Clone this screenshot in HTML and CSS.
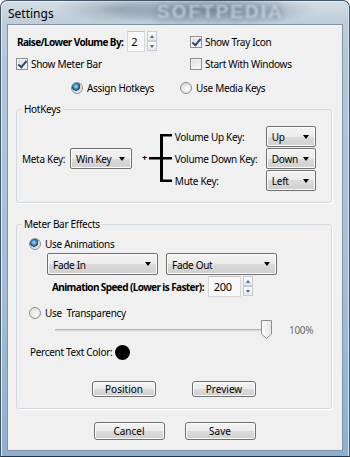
FILE: index.html
```html
<!DOCTYPE html>
<html lang="en">

<head>
    <meta charset="UTF-8">
    <meta name="viewport" content="width=device-width, initial-scale=1.0">
    <title>Settings</title>
    <link rel="stylesheet" href="styles.css">
</head>

<body>
    <div class="window">
        <div class="titlebar">
            <span class="title">Settings</span>
            <span class="glass">SOFTPEDIA</span>
        </div>
        <div class="client">
            <div class="grid">
                <div class="cell">
                    <b class="bold">Raise/Lower Volume By:</b>
                    <span class="spin"><span class="num">2</span><span class="arrows"><i class="up"></i><i class="down"></i></span></span>
                </div>
                <label class="cell check"><span class="box on"></span>Show Tray Icon</label>
                <label class="cell check"><span class="box on"></span>Show Meter Bar</label>
                <label class="cell check"><span class="box"></span>Start With Windows</label>
            </div>

            <div class="modes">
                <label class="mode"><span class="radio on"></span>Assign Hotkeys</label>
                <label class="mode"><span class="radio"></span>Use Media Keys</label>
            </div>

            <fieldset class="group">
                <legend>HotKeys</legend>
                <div class="hot">
                    <span class="meta">Meta Key:</span>
                    <span class="combo win">Win Key</span>
                    <span class="plus">+</span>
                    <svg class="bracket" width="23" height="50" viewBox="0 0 23 50">
                        <rect x="11" y="1" width="3" height="48" fill="#000" />
                        <rect x="11" y="1" width="12" height="2.5" fill="#000" />
                        <rect x="0" y="24" width="23" height="2.5" fill="#000" />
                        <rect x="11" y="46.5" width="12" height="2.5" fill="#000" />
                    </svg>
                    <div class="keys">
                        <div class="key"><span>Volume Up Key:</span><span class="combo small">Up</span></div>
                        <div class="key"><span>Volume Down Key:</span><span class="combo small">Down</span></div>
                        <div class="key"><span>Mute Key:</span><span class="combo small">Left</span></div>
                    </div>
                </div>
            </fieldset>

            <fieldset class="group meter">
                <legend>Meter Bar Effects</legend>
                <div class="inner">
                    <label class="opt"><span class="radio on"></span>Use Animations</label>
                    <div class="fades">
                        <span class="combo fade">Fade In</span>
                        <span class="combo fade">Fade Out</span>
                    </div>
                    <div class="speed">
                        <b class="bold">Animation Speed (Lower is Faster):</b>
                        <span class="spin wide"><span class="num">200</span><span class="arrows"><i class="up"></i><i class="down"></i></span></span>
                    </div>
                    <label class="opt trans"><span class="radio"></span>Use&nbsp; Transparency</label>
                    <div class="slider">
                        <span class="track">
                            <svg class="thumb" width="11" height="19" viewBox="0 0 11 19">
                                <defs>
                                    <linearGradient id="tg" x1="0" y1="0" x2="1" y2="0">
                                        <stop offset="0" stop-color="#fdfdfd" />
                                        <stop offset="1" stop-color="#e4e4e4" />
                                    </linearGradient>
                                </defs>
                                <path d="M0.5 0.5 H10.5 V14 L5.5 18.5 L0.5 14 Z" fill="url(#tg)" stroke="#8c8c8c" />
                            </svg>
                        </span>
                        <span class="pct">100%</span>
                    </div>
                    <div class="color">Percent Text Color:<span class="dot"></span></div>
                    <div class="buttons">
                        <button class="btn small">Position</button>
                        <button class="btn small">Preview</button>
                    </div>
                </div>
            </fieldset>

            <div class="buttons bottom">
                <button class="btn">Cancel</button>
                <button class="btn">Save</button>
            </div>
        </div>
    </div>
</body>

</html>
```

FILE: styles.css
```css
* {
    margin: 0;
    padding: 0;
    box-sizing: border-box;
}

body {
    background: #fff;
    font-family: "Noto Sans", "Open Sans", sans-serif;
    font-size: 10px;
    letter-spacing: -0.3px;
    line-height: 14px;
    color: #000;
    white-space: nowrap;
}

.window {
    position: relative;
    display: flex;
    flex-direction: column;
    width: 350px;
    height: 457px;
    padding: 0 6px 5px;
    border: 1px solid #44566a;
    border-bottom-color: #263442;
    border-radius: 7px 7px 0 0;
    background: linear-gradient(180deg, #d3dce4 0, #bfcdd9 22px, #b2c7da 60px, #a6bfd6 60%, #8fb0cd 100%);
    box-shadow: inset 1px 1px 0 #e4edf5, inset -1px 0 0 #d5e2ee;
    overflow: hidden;
}

.titlebar {
    position: relative;
    display: flex;
    align-items: center;
    height: 23px;
    padding: 3px 0 0 1px;
    background: radial-gradient(ellipse 110px 16px at 200px 9px, rgba(70, 88, 108, 0.55), rgba(70, 88, 108, 0) 100%),
        radial-gradient(ellipse 60px 14px at 110px 8px, rgba(90, 106, 122, 0.35), rgba(90, 106, 122, 0) 100%);
}

.title {
    position: relative;
    z-index: 1;
    font-size: 12px;
    letter-spacing: 0;
}

.glass {
    position: absolute;
    left: 150px;
    top: 0;
    font: bold 19px "Liberation Sans", sans-serif;
    letter-spacing: 2px;
    color: rgba(232, 238, 244, 0.6);
    text-shadow: 0 0 6px #5a6d80;
    filter: blur(1.1px);
}

.client {
    display: flex;
    flex-direction: column;
    flex: 1;
    padding: 0 9px 0 8px;
    border: 1px solid #8193a5;
    background: #f0f0f0;
}

/* top options */
.grid {
    display: grid;
    grid-template-columns: 174px 1fr;
    grid-template-rows: 21px 14px;
    row-gap: 5px;
    margin-top: 6px;
}

.cell {
    display: flex;
    align-items: center;
}

.bold {
    font-weight: bold;
    letter-spacing: -0.6px;
    padding-left: 1px;
}

.check .box {
    margin-right: 3px;
}

.box {
    flex: none;
    position: relative;
    width: 12px;
    height: 12px;
    border: 1px solid #8e8f8f;
    background: linear-gradient(135deg, #dcdcdc, #fbfbfb);
    box-shadow: inset 0 0 0 1px #f4f4f4;
}

.box.on::after {
    content: "";
    position: absolute;
    left: 3px;
    top: 0px;
    width: 3px;
    height: 7px;
    border: solid #2e4a84;
    border-width: 0 2px 2px 0;
    transform: rotate(40deg);
}

.radio {
    flex: none;
    width: 12px;
    height: 12px;
    margin-right: 4px;
    border: 1px solid #8e8f8f;
    border-radius: 50%;
    background: radial-gradient(circle at 60% 60%, #fdfdfd, #d4d4d4);
}

.radio.on {
    background: radial-gradient(circle at 40% 35%, #b9e6fb 0, #3f93c8 25%, #17466f 45%, #d9d9d9 50%, #f8f8f8 100%);
}

.spin {
    display: flex;
    gap: 2px;
    margin-left: 4px;
}

.spin .num {
    width: 18px;
    height: 21px;
    padding: 3px 0 0 3px;
    font-size: 11px;
    border: 1px solid #d7d7d7;
    border-top-color: #c2c2c2;
    background: #f8f8f8;
}

.spin.wide .num {
    width: 33px;
    padding-left: 5px;
}

.arrows {
    display: flex;
    flex-direction: column;
}

.arrows i {
    position: relative;
    width: 10px;
    height: 10px;
    border: 1px solid #c6ccd3;
    background: linear-gradient(#fafafa, #e6e8eb);
}

.arrows i::after {
    content: "";
    position: absolute;
    left: 2px;
    top: 3px;
    border: 2.5px solid transparent;
}

.arrows .up::after {
    top: 0.5px;
    border-bottom: 3px solid #4d6290;
}

.arrows .down::after {
    top: 3px;
    border-top: 3px solid #4d6290;
}

.modes {
    display: flex;
    height: 14px;
    margin: 10px 0 0 55px;
}

.mode {
    display: flex;
    align-items: center;
    width: 109px;
}

/* group boxes */
.group {
    position: relative;
    min-width: 0;
    margin: 7px 1px 0 0;
    border: 1px solid #d2d9df;
    border-radius: 3px;
    box-shadow: 1px 1px 0 #fff;
}

.group legend {
    margin-left: 5px;
    padding: 0 2px;
    line-height: 14px;
}

.hot {
    display: flex;
    align-items: center;
    padding: 10px 14px 11px 5px;
}

.meta {
    flex: none;
    width: 48px;
}

.plus {
    margin: 0 2px 2px 10px;
    font-weight: bold;
    font-size: 9px;
}

.bracket {
    flex: none;
    margin-top: -2px;
}

.keys {
    display: flex;
    flex-direction: column;
    gap: 1px;
    margin-left: 3px;
}

.key {
    display: flex;
    align-items: center;
    justify-content: space-between;
    width: 141px;
    height: 21px;
}

.combo {
    flex: none;
    position: relative;
    display: flex;
    align-items: center;
    height: 21px;
    padding: 1px 0 0 5px;
    border: 1px solid #707070;
    border-radius: 2px;
    background: linear-gradient(#f3f3f3 0, #ebebeb 50%, #dcdcdc 50%, #cfcfcf 100%);
    box-shadow: inset 0 0 0 1px #fbfbfb;
}

.combo::after {
    content: "";
    position: absolute;
    right: 6px;
    top: 8px;
    border: 3.5px solid transparent;
    border-top: 4px solid #000;
}

.combo.win {
    width: 62px;
}

.combo.small {
    width: 50px;
}

.combo.fade {
    width: 111px;
    height: 22px;
}

/* meter bar effects */
.meter {
    margin-top: 14px;
}

.inner {
    display: flex;
    flex-direction: column;
    padding: 6px 0 11px 12px;
}

.opt {
    display: flex;
    align-items: center;
    height: 14px;
}

.fades {
    display: flex;
    gap: 8px;
    margin: 2px 0 0 18px;
}

.speed {
    display: flex;
    align-items: center;
    margin: 1px 0 0 22px;
}

.speed .spin {
    margin-left: 4px;
}

.trans {
    margin-top: 9px;
}

.slider {
    display: flex;
    align-items: center;
    height: 20px;
    margin-left: 26px;
}

.track {
    position: relative;
    width: 210px;
    height: 3px;
    border-top: 1px solid #b8b8b8;
    border-bottom: 1px solid #e8e8e8;
    background: #d6d6d6;
}

.thumb {
    position: absolute;
    right: -7px;
    top: -10px;
}

.pct {
    margin-left: 24px;
    color: #6b6b6b;
}

.color {
    display: flex;
    align-items: center;
    height: 16px;
    margin: 4px 0 0 1px;
}

.dot {
    width: 15px;
    height: 15px;
    margin-left: 3px;
    border-radius: 50%;
    background: #000;
}

.buttons {
    display: flex;
    justify-content: center;
    gap: 36px;
    margin: 21px 0 0 -12px;
}

.btn {
    width: 64px;
    height: 16px;
    font: inherit;
    line-height: 12px;
    color: #000;
    border: 1px solid #707070;
    border-radius: 3px;
    background: linear-gradient(#f3f3f3 0, #ebebeb 50%, #dcdcdc 50%, #cfcfcf 100%);
    box-shadow: inset 0 0 0 1px #fbfbfb;
}

.bottom {
    gap: 20px;
    margin: 13px 0 0 0;
}

.bottom .btn {
    width: 71px;
    height: 18px;
}
```
